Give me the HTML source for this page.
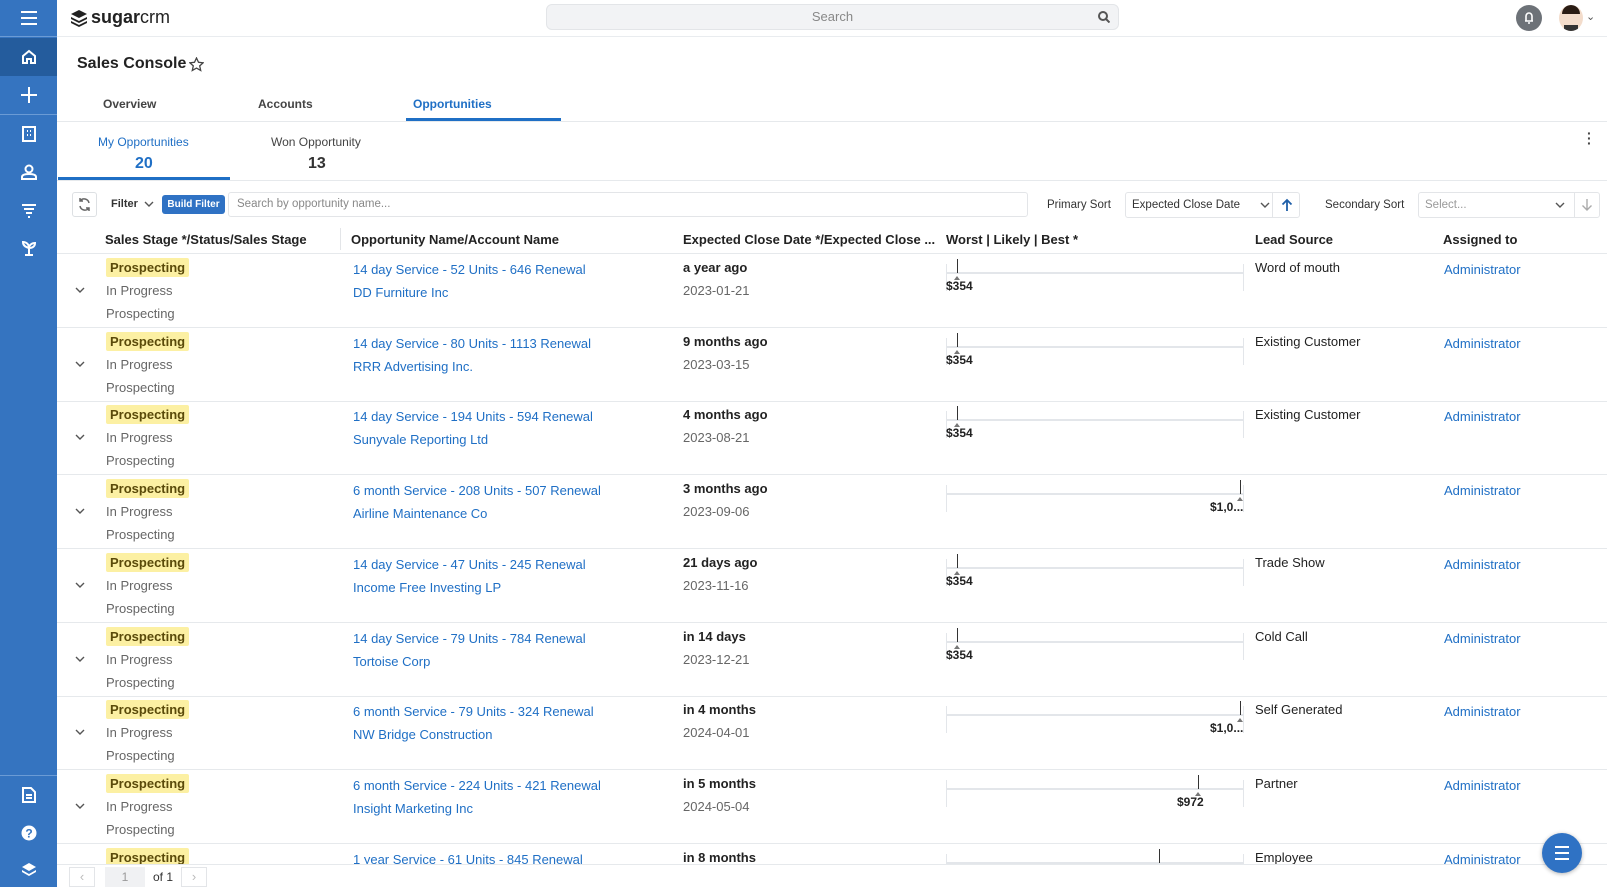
<!DOCTYPE html>
<html><head><meta charset="utf-8"><style>
*{box-sizing:border-box;margin:0;padding:0}
body{width:1607px;height:887px;overflow:hidden;font-family:"Liberation Sans",sans-serif;font-size:13px;color:#333;background:#fff;position:relative}
.a{position:absolute;white-space:nowrap}
#side{position:absolute;left:0;top:0;width:57px;height:887px;background:#3574c0;z-index:5}
.si{position:absolute;left:0;width:57px;display:flex;align-items:center;justify-content:center}
.blue{color:#1f6fc5}
.badge{background:#fcf0a3;color:#5a4a0a;font-weight:bold;padding:2px 4px;border-radius:2px}
.gray{color:#666}
.hl{position:absolute;height:1px;background:#e6e9ec}
#rows{position:absolute;left:0;top:0;width:1607px;height:866px;overflow:hidden}
</style></head><body>
<div id="side">
 <div class="si" style="top:0;height:36px"><svg width="18" height="16"><path d="M1 2h16M1 8h16M1 14h16" stroke="#fff" stroke-width="2"/></svg></div>
 <div style="position:absolute;top:36px;left:0;width:57px;height:1px;background:#6b9bd5"></div>
 <div class="si" style="top:38px;height:38px;background:#245c9d"><svg width="16" height="16" fill="none" stroke="#fff" stroke-width="2"><path d="M2 7L8 2l6 5v7h-4v-4H6v4H2z"/></svg></div>
 <div class="si" style="top:76px;height:38px"><svg width="18" height="18"><path d="M9 1v16M1 9h16" stroke="#fff" stroke-width="2"/></svg></div>
 <div style="position:absolute;top:114px;left:0;width:57px;height:1px;background:#6b9bd5"></div>
 <div class="si" style="top:115px;height:38px"><svg width="14" height="16" fill="none" stroke="#fff" stroke-width="2"><rect x="1" y="1" width="12" height="14"/><path d="M5 5h1M8 5h1M5 9h1M8 9h1" /></svg></div>
 <div class="si" style="top:153px;height:38px"><svg width="16" height="16" fill="none" stroke="#fff" stroke-width="2"><circle cx="8" cy="5" r="3.5"/><path d="M1 15v-2c0-2 2-3 7-3s7 1 7 3v2z"/></svg></div>
 <div class="si" style="top:191px;height:38px"><svg width="16" height="16" stroke="#fff" stroke-width="2"><path d="M1 3h14M3 7h10M5 11h6M7 15h2"/></svg></div>
 <div class="si" style="top:229px;height:38px"><svg width="16" height="16" fill="none" stroke="#fff" stroke-width="2"><path d="M8 15V7M8 8C8 4 5 2 2 2c0 3 2 5 6 6M8 8c0-3 3-5 6-5 0 3-2 5-6 5M4 15h8"/></svg></div>
 <div style="position:absolute;top:775px;left:0;width:57px;height:1px;background:#6b9bd5"></div>
 <div class="si" style="top:776px;height:38px"><svg width="14" height="16" fill="none" stroke="#fff" stroke-width="2"><path d="M1 1h8l4 4v10H1z M4 8h6M4 11h6"/></svg></div>
 <div class="si" style="top:814px;height:38px"><svg width="16" height="16"><circle cx="8" cy="8" r="7.5" fill="#fff"/><text x="8" y="12.5" font-size="12" font-weight="bold" text-anchor="middle" fill="#3574c0" font-family="Liberation Sans">?</text></svg></div>
 <div class="si" style="top:852px;height:35px"><svg width="16" height="16" fill="#fff"><path d="M8 1l7 4-7 4-7-4z M1 8l7 4 7-4v2l-7 4-7-4z"/></svg></div>
</div>
<!-- top bar -->
<div class="hl" style="left:57px;top:36px;width:1550px;background:#e9ecef"></div>
<div class="a" style="left:69px;top:7px;display:flex;align-items:center">
 <svg width="20" height="20"><path d="M10 2l8 4-8 4-8-4z M2 9l8 4 8-4v2l-8 4-8-4z M2 13l8 4 8-4v2l-8 4-8-4z" fill="#222"/></svg>
 <span style="font-size:18px;color:#222;margin-left:2px"><b style="font-weight:600">sugar</b><span style="font-weight:300">crm</span></span>
</div>
<div class="a" style="left:546px;top:4px;width:573px;height:26px;background:#f2f3f5;border:1px solid #e3e5e8;border-radius:6px;text-align:center;line-height:24px;color:#888">Search
 <svg style="position:absolute;right:8px;top:6px" width="12" height="12" fill="none" stroke="#555" stroke-width="2"><circle cx="5" cy="5" r="4"/><path d="M8 8l3.5 3.5"/></svg></div>
<div class="a" style="left:1516px;top:5px;width:26px;height:26px;border-radius:50%;background:#6d7278"><svg width="26" height="26"><path d="M9 16h8M10 16v-5a3 3 0 016 0v5M12 18h2" stroke="#fff" stroke-width="1.6" fill="none"/></svg></div>
<div class="a" style="left:1559px;top:5px;width:24px;height:26px;border-radius:50%;background:#f3dccb;overflow:hidden"><div style="position:absolute;left:3px;top:0;width:18px;height:9px;background:#2a1c14;border-radius:9px 9px 0 0"></div><div style="position:absolute;left:5px;top:20px;width:14px;height:8px;background:#333"></div></div>
<div class="a" style="left:1586px;top:10px;color:#555;font-size:11px">&#8964;</div>
<!-- header -->
<div class="a" style="left:77px;top:55px;font-size:16px;font-weight:bold;color:#222">Sales Console</div>
<svg class="a" style="left:189px;top:57px" width="15" height="15" fill="none" stroke="#444" stroke-width="1.3"><path d="M7.5 1l2 4.3 4.6.5-3.4 3.1 1 4.6-4.2-2.4-4.2 2.4 1-4.6L.9 5.8l4.6-.5z"/></svg>
<div class="a" style="left:103px;top:97px;color:#444;font-weight:bold;font-size:12px">Overview</div>
<div class="a" style="left:258px;top:97px;color:#444;font-weight:bold;font-size:12px">Accounts</div>
<div class="a" style="left:413px;top:97px;color:#1f6fc5;font-weight:bold;font-size:12px">Opportunities</div>
<div class="a" style="left:406px;top:118px;width:155px;height:3px;background:#1f6fc5"></div>
<div class="hl" style="left:57px;top:121px;width:1550px"></div>
<div class="a" style="left:98px;top:135px;color:#1f6fc5;font-size:12px">My Opportunities</div>
<div class="a" style="left:135px;top:155px;color:#1f6fc5;font-size:16px;font-weight:bold">20</div>
<div class="a" style="left:271px;top:135px;color:#444;font-size:12px">Won Opportunity</div>
<div class="a" style="left:308px;top:155px;color:#333;font-size:16px;font-weight:bold">13</div>
<div class="a" style="left:58px;top:177px;width:172px;height:3px;background:#1f6fc5"></div>
<div class="hl" style="left:57px;top:180px;width:1550px"></div>
<div class="a" style="left:1587px;top:131px;color:#444;font-weight:bold;line-height:5px;font-size:14px">·<br>·<br>·</div>
<!-- toolbar -->
<div class="a" style="left:72px;top:192px;width:25px;height:25px;border:1px solid #dde0e3;border-radius:3px"><svg width="23" height="23" fill="none" stroke="#666" stroke-width="1.5"><path d="M16 10a5 5 0 00-9-2M7 13a5 5 0 009 2M7 5v3h3M16 18v-3h-3"/></svg></div>
<div class="a" style="left:111px;top:198px;font-size:11px;font-weight:bold;color:#333">Filter</div>
<svg class="a" style="left:144px;top:201px" width="10" height="7" fill="none" stroke="#555" stroke-width="1.4"><path d="M1 1l4 4 4-4"/></svg>
<div class="a" style="left:162px;top:195px;width:63px;height:19px;background:#2f72c4;color:#fff;border-radius:3px;font-size:10px;font-weight:bold;text-align:center;line-height:19px">Build Filter</div>
<div class="a" style="left:228px;top:192px;width:800px;height:25px;border:1px solid #e3e5e8;border-radius:3px;color:#888;font-size:11.5px;line-height:23px;padding-left:8px">Search by opportunity name...</div>
<div class="a" style="left:1047px;top:199px;font-size:11.5px;color:#333">Primary Sort</div>
<div class="a" style="left:1125px;top:192px;width:175px;height:26px;border:1px solid #e3e5e8;border-radius:3px;font-size:11.5px;line-height:24px;padding-left:6px;color:#333">Expected Close Date<svg style="position:absolute;left:134px;top:9px" width="10" height="7" fill="none" stroke="#555" stroke-width="1.4"><path d="M1 1l4 4 4-4"/></svg><span style="position:absolute;left:146px;top:0;width:1px;height:24px;background:#e3e5e8"></span><svg style="position:absolute;left:155px;top:5px" width="12" height="14" fill="none" stroke="#1f5fa8" stroke-width="1.8"><path d="M6 13V2M1.5 6.5L6 2l4.5 4.5"/></svg></div>
<div class="a" style="left:1325px;top:199px;font-size:11.5px;color:#333">Secondary Sort</div>
<div class="a" style="left:1418px;top:192px;width:182px;height:26px;border:1px solid #e3e5e8;border-radius:3px;font-size:11.5px;line-height:24px;padding-left:6px;color:#999">Select...<svg style="position:absolute;left:136px;top:9px" width="10" height="7" fill="none" stroke="#555" stroke-width="1.4"><path d="M1 1l4 4 4-4"/></svg><span style="position:absolute;left:155px;top:0;width:1px;height:24px;background:#e3e5e8"></span><svg style="position:absolute;left:162px;top:5px" width="12" height="14" fill="none" stroke="#aaa" stroke-width="1.4"><path d="M6 1v11M1.5 7.5L6 12l4.5-4.5"/></svg></div>
<!-- table header -->
<div class="a" style="left:105px;top:232px;font-weight:bold;color:#222">Sales Stage */Status/Sales Stage</div>
<div class="a" style="left:340px;top:228px;width:1px;height:22px;background:#e3e5e8"></div>
<div class="a" style="left:351px;top:232px;font-weight:bold;color:#222">Opportunity Name/Account Name</div>
<div class="a" style="left:683px;top:232px;font-weight:bold;color:#222">Expected Close Date */Expected Close ...</div>
<div class="a" style="left:946px;top:232px;font-weight:bold;color:#222">Worst | Likely | Best *</div>
<div class="a" style="left:1255px;top:232px;font-weight:bold;color:#222">Lead Source</div>
<div class="a" style="left:1443px;top:232px;font-weight:bold;color:#222">Assigned to</div>
<div class="hl" style="left:57px;top:253px;width:1550px"></div>
<div id="rows"></div>
<!-- pagination -->
<div class="a" style="left:57px;top:864px;width:1550px;height:23px;background:#fff;border-top:1px solid #e6e9ec;z-index:3"></div>
<div class="a" style="z-index:4;left:69px;top:867px;width:26px;height:20px;border:1px solid #e3e5e8;color:#bbb;text-align:center;line-height:18px">&#8249;</div>
<div class="a" style="z-index:4;left:105px;top:867px;width:40px;height:20px;background:#f0f1f3;color:#999;text-align:center;line-height:20px;font-size:12px">1</div>
<div class="a" style="z-index:4;left:153px;top:870px;font-size:12px;color:#333">of 1</div>
<div class="a" style="z-index:4;left:181px;top:867px;width:26px;height:20px;border:1px solid #e3e5e8;color:#bbb;text-align:center;line-height:18px">&#8250;</div>
<div class="a" style="z-index:6;left:1542px;top:833px;width:40px;height:40px;border-radius:50%;background:#2f72c4;box-shadow:0 1px 4px rgba(0,0,0,.3)"><svg width="40" height="40"><path d="M13 14h14M13 20h14M13 26h14" stroke="#fff" stroke-width="2"/></svg></div>
<script>
var d=[
["14 day Service - 52 Units - 646 Renewal","DD Furniture Inc","a year ago","2023-01-21","$354",957,"Word of mouth"],
["14 day Service - 80 Units - 1113 Renewal","RRR Advertising Inc.","9 months ago","2023-03-15","$354",957,"Existing Customer"],
["14 day Service - 194 Units - 594 Renewal","Sunyvale Reporting Ltd","4 months ago","2023-08-21","$354",957,"Existing Customer"],
["6 month Service - 208 Units - 507 Renewal","Airline Maintenance Co","3 months ago","2023-09-06","$1,0...",1240,""],
["14 day Service - 47 Units - 245 Renewal","Income Free Investing LP","21 days ago","2023-11-16","$354",957,"Trade Show"],
["14 day Service - 79 Units - 784 Renewal","Tortoise Corp","in 14 days","2023-12-21","$354",957,"Cold Call"],
["6 month Service - 79 Units - 324 Renewal","NW Bridge Construction","in 4 months","2024-04-01","$1,0...",1240,"Self Generated"],
["6 month Service - 224 Units - 421 Renewal","Insight Marketing Inc","in 5 months","2024-05-04","$972",1198,"Partner"],
["1 year Service - 61 Units - 845 Renewal","","in 8 months","","",1159,"Employee"]];
var h="";
d.forEach(function(r,i){var y=254+i*73.7;
h+='<div class="a" style="left:106px;top:'+(y+6)+'px"><span class="badge">Prospecting</span></div>';
h+='<svg class="a" style="left:75px;top:'+(y+33)+'px" width="10" height="7" fill="none" stroke="#555" stroke-width="1.4"><path d="M1 1l4 4 4-4"/></svg>';
h+='<div class="a gray" style="left:106px;top:'+(y+29)+'px">In Progress</div>';
h+='<div class="a gray" style="left:106px;top:'+(y+52)+'px">Prospecting</div>';
h+='<div class="a blue" style="left:353px;top:'+(y+8)+'px">'+r[0]+'</div>';
h+='<div class="a blue" style="left:353px;top:'+(y+31)+'px">'+r[1]+'</div>';
h+='<div class="a" style="left:683px;top:'+(y+6)+'px;font-weight:bold;color:#222">'+r[2]+'</div>';
h+='<div class="a gray" style="left:683px;top:'+(y+29)+'px">'+r[3]+'</div>';
h+='<div class="a" style="left:946px;top:'+(y+18)+'px;width:297px;height:2px;background:#e3e6ea"></div>';
h+='<div class="a" style="left:946px;top:'+(y+10)+'px;width:1px;height:27px;background:#e3e6ea"></div>';
h+='<div class="a" style="left:1243px;top:'+(y+10)+'px;width:1px;height:27px;background:#e3e6ea"></div>';
h+='<div class="a" style="left:'+r[5]+'px;top:'+(y+5)+'px;width:1px;height:14px;background:#333"></div>';
if(r[4]){h+='<div class="a" style="left:'+(r[5]-3)+'px;top:'+(y+22)+'px;border:3px solid transparent;border-bottom:4px solid #777;border-top:0"></div>';
var lx=r[5]>1000?(r[5]-30):946;if(r[4]=="$972")lx=r[5]-21;
h+='<div class="a" style="left:'+lx+'px;top:'+(y+25)+'px;font-weight:bold;font-size:12px;color:#222">'+r[4]+'</div>';}
h+='<div class="a" style="left:1255px;top:'+(y+6)+'px;color:#222">'+r[6]+'</div>';
h+='<div class="a blue" style="left:1444px;top:'+(y+8)+'px">Administrator</div>';
h+='<div class="hl" style="left:57px;top:'+(y+73)+'px;width:1550px"></div>';
});
document.getElementById("rows").innerHTML=h;
</script>
</body></html>
